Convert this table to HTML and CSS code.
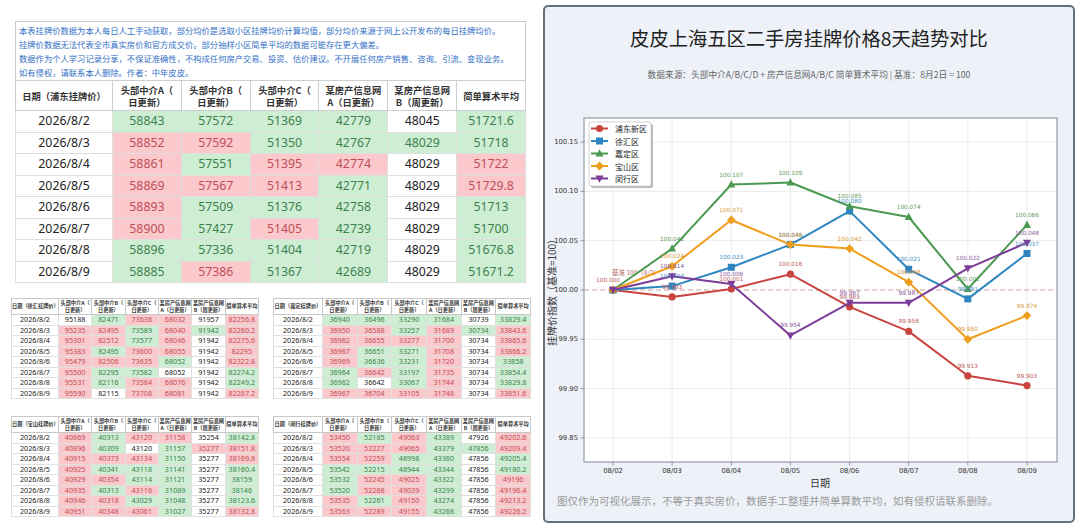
FILE: index.html
```html
<!DOCTYPE html>
<html lang="zh-CN">
<head>
<meta charset="utf-8">
<title>皮皮上海五区二手房挂牌价格8天趋势对比</title>
<link rel="stylesheet" href="styles.css">
</head>
<body>
<div class="page">
  <div class="left">
    <div class="notice">
      本表挂牌价数据为本人每日人工手动获取，部分均价是选取小区挂牌均价计算均值，部分均价来源于网上公开发布的每日挂牌均价。<br>
      挂牌价数据无法代表全市真实房价和官方成交价。部分抽样小区简单平均的数据可能存在更大偏差。<br>
      数据作为个人学习记录分享，不保证准确性，不构成任何房产交易、投资、估价建议。不开展任何房产销售、咨询、引流、变现业务。<br>
      如有侵权，请联系本人删除。作者：中年皮皮。
    </div>
    <table class="main">
      <colgroup><col class="c-date"><col><col><col><col><col><col></colgroup>
      <thead>
        <tr><th>日期（浦东挂牌价）</th><th>头部中介A（<br>日更新）</th><th>头部中介B（<br>日更新）</th><th>头部中介C（<br>日更新）</th><th>某房产信息网<br>A（日更新）</th><th>某房产信息网<br>B（周更新）</th><th>简单算术平均</th></tr>
      </thead>
      <tbody>
        <tr><td>2026/8/2</td><td class="g">58843</td><td class="g">57572</td><td class="g">51369</td><td class="g">42779</td><td>48045</td><td class="g">51721.6</td></tr>
        <tr><td>2026/8/3</td><td class="r">58852</td><td class="r">57592</td><td class="g">51350</td><td class="g">42767</td><td class="g">48029</td><td class="g">51718</td></tr>
        <tr><td>2026/8/4</td><td class="r">58861</td><td class="g">57551</td><td class="r">51395</td><td class="r">42774</td><td>48029</td><td class="r">51722</td></tr>
        <tr><td>2026/8/5</td><td class="r">58869</td><td class="r">57567</td><td class="r">51413</td><td class="g">42771</td><td>48029</td><td class="r">51729.8</td></tr>
        <tr><td>2026/8/6</td><td class="r">58893</td><td class="g">57509</td><td class="g">51376</td><td class="g">42758</td><td>48029</td><td class="g">51713</td></tr>
        <tr><td>2026/8/7</td><td class="r">58900</td><td class="g">57427</td><td class="r">51405</td><td class="g">42739</td><td>48029</td><td class="g">51700</td></tr>
        <tr><td>2026/8/8</td><td class="g">58896</td><td class="g">57336</td><td class="g">51404</td><td class="g">42719</td><td>48029</td><td class="g">51676.8</td></tr>
        <tr><td>2026/8/9</td><td class="g">58885</td><td class="r">57386</td><td class="g">51367</td><td class="g">42689</td><td>48029</td><td class="g">51671.2</td></tr>
      </tbody>
    </table>

    <div class="minis">
      <table class="mini">
        <colgroup><col class="m-date"><col><col><col><col><col><col></colgroup>
        <thead><tr><th>日期（徐汇挂牌价）</th><th>头部中介A（<br>日更新）</th><th>头部中介B（<br>日更新）</th><th>头部中介C（<br>日更新）</th><th>某房产信息网<br>A（日更新）</th><th>某房产信息网<br>B（周更新）</th><th>简单算术平均</th></tr></thead>
        <tbody>
          <tr><td>2026/8/2</td><td>95188</td><td class="g">82471</td><td class="r">73636</td><td class="r">68032</td><td>91957</td><td class="r">82256.8</td></tr>
          <tr><td>2026/8/3</td><td class="r">95235</td><td class="r">82495</td><td class="g">73589</td><td class="r">68040</td><td class="g">91942</td><td class="r">82260.2</td></tr>
          <tr><td>2026/8/4</td><td class="r">95301</td><td class="r">82512</td><td class="g">73577</td><td class="r">68046</td><td>91942</td><td class="r">82275.6</td></tr>
          <tr><td>2026/8/5</td><td class="r">95383</td><td class="g">82495</td><td class="r">73600</td><td class="r">68055</td><td>91942</td><td class="r">82295</td></tr>
          <tr><td>2026/8/6</td><td class="r">95479</td><td class="r">82506</td><td class="r">73635</td><td class="g">68052</td><td>91942</td><td class="r">82322.8</td></tr>
          <tr><td>2026/8/7</td><td class="r">95500</td><td class="g">82295</td><td class="g">73582</td><td>68052</td><td>91942</td><td class="g">82274.2</td></tr>
          <tr><td>2026/8/8</td><td class="r">95531</td><td class="g">82116</td><td class="r">73584</td><td class="r">68076</td><td>91942</td><td class="g">82249.2</td></tr>
          <tr><td>2026/8/9</td><td class="r">95590</td><td>82115</td><td class="r">73708</td><td class="r">68081</td><td>91942</td><td class="r">82287.2</td></tr>
        </tbody>
      </table>

      <table class="mini">
        <colgroup><col class="m-date"><col><col><col><col><col><col></colgroup>
        <thead><tr><th>日期（嘉定挂牌价）</th><th>头部中介A（<br>日更新）</th><th>头部中介B（<br>日更新）</th><th>头部中介C（<br>日更新）</th><th>某房产信息网<br>A（日更新）</th><th>某房产信息网<br>B（周更新）</th><th>简单算术平均</th></tr></thead>
        <tbody>
          <tr><td>2026/8/2</td><td class="g">36940</td><td class="g">36496</td><td class="g">33290</td><td class="g">31684</td><td>30739</td><td class="g">33829.4</td></tr>
          <tr><td>2026/8/3</td><td class="r">36950</td><td class="r">36588</td><td class="g">33257</td><td class="r">31689</td><td class="g">30734</td><td class="r">33843.6</td></tr>
          <tr><td>2026/8/4</td><td class="r">36962</td><td class="r">36655</td><td class="r">33277</td><td class="r">31700</td><td>30734</td><td class="r">33865.6</td></tr>
          <tr><td>2026/8/5</td><td class="r">36967</td><td class="g">36651</td><td class="g">33271</td><td class="r">31708</td><td>30734</td><td class="r">33866.2</td></tr>
          <tr><td>2026/8/6</td><td class="r">36969</td><td class="g">36636</td><td class="g">33231</td><td class="r">31720</td><td>30734</td><td class="g">33858</td></tr>
          <tr><td>2026/8/7</td><td class="g">36964</td><td class="r">36642</td><td class="g">33197</td><td class="r">31735</td><td>30734</td><td class="g">33854.4</td></tr>
          <tr><td>2026/8/8</td><td class="g">36962</td><td>36642</td><td class="g">33067</td><td class="r">31744</td><td>30734</td><td class="g">33829.8</td></tr>
          <tr><td>2026/8/9</td><td class="r">36967</td><td class="r">36704</td><td class="r">33105</td><td class="r">31748</td><td>30734</td><td class="r">33851.6</td></tr>
        </tbody>
      </table>

      <table class="mini">
        <colgroup><col class="m-date"><col><col><col><col><col><col></colgroup>
        <thead><tr><th>日期（宝山挂牌价）</th><th>头部中介A（<br>日更新）</th><th>头部中介B（<br>日更新）</th><th>头部中介C（<br>日更新）</th><th>某房产信息网<br>A（日更新）</th><th>某房产信息网<br>B（周更新）</th><th>简单算术平均</th></tr></thead>
        <tbody>
          <tr><td>2026/8/2</td><td class="r">40869</td><td class="g">40313</td><td class="r">43120</td><td class="r">31158</td><td>35254</td><td class="g">38142.8</td></tr>
          <tr><td>2026/8/3</td><td class="r">40896</td><td class="g">40309</td><td>43120</td><td class="g">31157</td><td class="r">35277</td><td class="r">38151.8</td></tr>
          <tr><td>2026/8/4</td><td class="r">40915</td><td class="r">40373</td><td class="r">43134</td><td class="g">31150</td><td>35277</td><td class="r">38169.8</td></tr>
          <tr><td>2026/8/5</td><td class="r">40925</td><td class="g">40341</td><td class="g">43118</td><td class="g">31141</td><td>35277</td><td class="g">38160.4</td></tr>
          <tr><td>2026/8/6</td><td class="r">40929</td><td class="r">40354</td><td class="g">43114</td><td class="g">31121</td><td>35277</td><td class="g">38159</td></tr>
          <tr><td>2026/8/7</td><td class="r">40935</td><td class="g">40313</td><td class="r">43116</td><td class="g">31089</td><td>35277</td><td class="g">38146</td></tr>
          <tr><td>2026/8/8</td><td class="r">40946</td><td class="r">40318</td><td class="g">43029</td><td class="g">31048</td><td>35277</td><td class="g">38123.6</td></tr>
          <tr><td>2026/8/9</td><td class="r">40951</td><td class="r">40348</td><td class="r">43061</td><td class="g">31027</td><td>35277</td><td class="r">38132.8</td></tr>
        </tbody>
      </table>

      <table class="mini">
        <colgroup><col class="m-date"><col><col><col><col><col><col></colgroup>
        <thead><tr><th>日期（闵行挂牌价）</th><th>头部中介A（<br>日更新）</th><th>头部中介B（<br>日更新）</th><th>头部中介C（<br>日更新）</th><th>某房产信息网<br>A（日更新）</th><th>某房产信息网<br>B（周更新）</th><th>简单算术平均</th></tr></thead>
        <tbody>
          <tr><td>2026/8/2</td><td class="r">53450</td><td class="g">52185</td><td class="r">49063</td><td class="g">43389</td><td>47926</td><td class="r">49202.6</td></tr>
          <tr><td>2026/8/3</td><td class="r">53520</td><td class="r">52227</td><td class="r">49065</td><td class="g">43379</td><td class="g">47856</td><td class="r">49209.4</td></tr>
          <tr><td>2026/8/4</td><td class="r">53554</td><td class="r">52259</td><td class="g">48998</td><td class="g">43360</td><td>47856</td><td class="g">49205.4</td></tr>
          <tr><td>2026/8/5</td><td class="g">53542</td><td class="g">52215</td><td class="g">48944</td><td class="g">43344</td><td>47856</td><td class="g">49180.2</td></tr>
          <tr><td>2026/8/6</td><td class="g">53532</td><td class="r">52245</td><td class="r">49025</td><td class="g">43322</td><td>47856</td><td class="r">49196</td></tr>
          <tr><td>2026/8/7</td><td class="g">53520</td><td class="r">52268</td><td class="r">49039</td><td class="g">43299</td><td>47856</td><td class="r">49196.4</td></tr>
          <tr><td>2026/8/8</td><td class="r">53535</td><td class="g">52261</td><td class="r">49150</td><td class="g">43274</td><td>47856</td><td class="r">49213.2</td></tr>
          <tr><td>2026/8/9</td><td class="r">53563</td><td class="r">52289</td><td class="r">49155</td><td class="g">43268</td><td>47856</td><td class="r">49226.2</td></tr>
        </tbody>
      </table>
    </div>
  </div>

  <div class="card">
    <div class="title">皮皮上海五区二手房挂牌价格8天趋势对比</div>
    <div class="sub">数据来源：头部中介A/B/C/D + 房产信息网A/B/C 简单算术平均 | 基准：8月2日 = 100</div>
    <svg class="chart" width="528" height="392" viewBox="545 100 528 392" xmlns="http://www.w3.org/2000/svg">
      <defs>
        <circle id="mk-o" cx="0" cy="0" r="3.6"/>
        <rect id="mk-s" x="-3.5" y="-3.5" width="7" height="7"/>
        <polygon id="mk-u" points="0,-4.3 4,3 -4,3"/>
        <polygon id="mk-d" points="0,-4.4 4.4,0 0,4.4 -4.4,0"/>
        <polygon id="mk-v" points="0,4.3 4,-3 -4,-3"/>
      </defs>
      <rect x="584" y="118" width="473" height="344" fill="#ffffff"/>
      <g class="grid">
        <line x1="584" y1="142.1" x2="1057" y2="142.1"/>
        <line x1="584" y1="191.4" x2="1057" y2="191.4"/>
        <line x1="584" y1="240.7" x2="1057" y2="240.7"/>
        <line x1="584" y1="339.3" x2="1057" y2="339.3"/>
        <line x1="584" y1="388.6" x2="1057" y2="388.6"/>
        <line x1="584" y1="437.9" x2="1057" y2="437.9"/>
        <line x1="613" y1="118" x2="613" y2="462"/>
        <line x1="672.1" y1="118" x2="672.1" y2="462"/>
        <line x1="731.3" y1="118" x2="731.3" y2="462"/>
        <line x1="790.4" y1="118" x2="790.4" y2="462"/>
        <line x1="849.6" y1="118" x2="849.6" y2="462"/>
        <line x1="908.7" y1="118" x2="908.7" y2="462"/>
        <line x1="967.8" y1="118" x2="967.8" y2="462"/>
        <line x1="1027" y1="118" x2="1027" y2="462"/>
      </g>
      <rect x="584" y="118" width="473" height="344" fill="none" stroke="#7f8893" stroke-width="1"/>
      <g class="ticks">
        <line x1="580.5" y1="142.1" x2="584" y2="142.1"/>
        <line x1="580.5" y1="191.4" x2="584" y2="191.4"/>
        <line x1="580.5" y1="240.7" x2="584" y2="240.7"/>
        <line x1="580.5" y1="290" x2="584" y2="290"/>
        <line x1="580.5" y1="339.3" x2="584" y2="339.3"/>
        <line x1="580.5" y1="388.6" x2="584" y2="388.6"/>
        <line x1="580.5" y1="437.9" x2="584" y2="437.9"/>
        <line x1="613" y1="462" x2="613" y2="465.5"/>
        <line x1="672.1" y1="462" x2="672.1" y2="465.5"/>
        <line x1="731.3" y1="462" x2="731.3" y2="465.5"/>
        <line x1="790.4" y1="462" x2="790.4" y2="465.5"/>
        <line x1="849.6" y1="462" x2="849.6" y2="465.5"/>
        <line x1="908.7" y1="462" x2="908.7" y2="465.5"/>
        <line x1="967.8" y1="462" x2="967.8" y2="465.5"/>
        <line x1="1027" y1="462" x2="1027" y2="465.5"/>
      </g>
      <g class="ytick">
        <text x="578" y="142.1">100.15</text>
        <text x="578" y="191.4">100.10</text>
        <text x="578" y="240.7">100.05</text>
        <text x="578" y="290">100.00</text>
        <text x="578" y="339.3">99.95</text>
        <text x="578" y="388.6">99.90</text>
        <text x="578" y="437.9">99.85</text>
      </g>
      <g class="xtick">
        <text x="613" y="471">08/02</text>
        <text x="672.1" y="471">08/03</text>
        <text x="731.3" y="471">08/04</text>
        <text x="790.4" y="471">08/05</text>
        <text x="849.6" y="471">08/06</text>
        <text x="908.7" y="471">08/07</text>
        <text x="967.8" y="471">08/08</text>
        <text x="1027" y="471">08/09</text>
      </g>
      <text class="axis-title" x="820" y="482">日期</text>
      <text class="axis-title" x="551" y="290" transform="rotate(-90 551 290)">挂牌价指数（基准=100）</text>

      <line class="baseline" x1="584" y1="290" x2="1057" y2="290"/>
      <text class="base-label" x="612" y="272">基准 100（8/2）</text>

      <g class="s-red">
        <polyline class="ln" points="613,290 672.1,296.9 731.3,289 790.4,274.2 849.6,306.8 908.7,331.4 967.8,375.8 1027,385.6"/>
        <use href="#mk-o" x="613" y="290"/><use href="#mk-o" x="672.1" y="296.9"/><use href="#mk-o" x="731.3" y="289"/><use href="#mk-o" x="790.4" y="274.2"/><use href="#mk-o" x="849.6" y="306.8"/><use href="#mk-o" x="908.7" y="331.4"/><use href="#mk-o" x="967.8" y="375.8"/><use href="#mk-o" x="1027" y="385.6"/>
      </g>
      <g class="s-blue">
        <polyline class="ln" points="613,290 672.1,286.1 731.3,267.3 790.4,244.6 849.6,211.1 908.7,269.3 967.8,298.9 1027,253.5"/>
        <use href="#mk-s" x="613" y="290"/><use href="#mk-s" x="672.1" y="286.1"/><use href="#mk-s" x="731.3" y="267.3"/><use href="#mk-s" x="790.4" y="244.6"/><use href="#mk-s" x="849.6" y="211.1"/><use href="#mk-s" x="908.7" y="269.3"/><use href="#mk-s" x="967.8" y="298.9"/><use href="#mk-s" x="1027" y="253.5"/>
      </g>
      <g class="s-green">
        <polyline class="ln" points="613,290 672.1,248.6 731.3,184.5 790.4,182.5 849.6,206.2 908.7,217 967.8,289 1027,224.9"/>
        <use href="#mk-u" x="613" y="290"/><use href="#mk-u" x="672.1" y="248.6"/><use href="#mk-u" x="731.3" y="184.5"/><use href="#mk-u" x="790.4" y="182.5"/><use href="#mk-u" x="849.6" y="206.2"/><use href="#mk-u" x="908.7" y="217"/><use href="#mk-u" x="967.8" y="289"/><use href="#mk-u" x="1027" y="224.9"/>
      </g>
      <g class="s-orange">
        <polyline class="ln" points="613,290 672.1,266.3 731.3,220 790.4,244.6 849.6,248.6 908.7,282.1 967.8,339.3 1027,315.6"/>
        <use href="#mk-d" x="613" y="290"/><use href="#mk-d" x="672.1" y="266.3"/><use href="#mk-d" x="731.3" y="220"/><use href="#mk-d" x="790.4" y="244.6"/><use href="#mk-d" x="849.6" y="248.6"/><use href="#mk-d" x="908.7" y="282.1"/><use href="#mk-d" x="967.8" y="339.3"/><use href="#mk-d" x="1027" y="315.6"/>
      </g>
      <g class="s-purple">
        <polyline class="ln" points="613,290 672.1,276.2 731.3,284.1 790.4,335.4 849.6,302.8 908.7,302.8 967.8,268.3 1027,242.7"/>
        <use href="#mk-v" x="613" y="290"/><use href="#mk-v" x="672.1" y="276.2"/><use href="#mk-v" x="731.3" y="284.1"/><use href="#mk-v" x="790.4" y="335.4"/><use href="#mk-v" x="849.6" y="302.8"/><use href="#mk-v" x="908.7" y="302.8"/><use href="#mk-v" x="967.8" y="268.3"/><use href="#mk-v" x="1027" y="242.7"/>
      </g>

      <g class="dl l-red">
        <text x="608" y="280">100.000</text>
        <text x="672.1" y="286.9">99.993</text>
        <text x="731.3" y="279">100.001</text>
        <text x="790.4" y="264.2">100.016</text>
        <text x="849.6" y="296.8">99.983</text>
        <text x="908.7" y="321.4">99.958</text>
        <text x="967.8" y="365.8">99.913</text>
        <text x="1027" y="375.6">99.903</text>
      </g>
      <g class="dl l-blue">
        <text x="672.1" y="276.1">100.004</text>
        <text x="731.3" y="257.3">100.023</text>
        <text x="790.4" y="234.6">100.046</text>
        <text x="849.6" y="201.1">100.080</text>
        <text x="908.7" y="259.3">100.021</text>
        <text x="967.8" y="288.9">99.991</text>
        <text x="1027" y="243.5">100.037</text>
      </g>
      <g class="dl l-green">
        <text x="672.1" y="238.6">100.042</text>
        <text x="731.3" y="174.5">100.107</text>
        <text x="790.4" y="172.5">100.109</text>
        <text x="849.6" y="196.2">100.085</text>
        <text x="908.7" y="207">100.074</text>
        <text x="967.8" y="279">100.001</text>
        <text x="1027" y="214.9">100.066</text>
      </g>
      <g class="dl l-orange">
        <text x="672.1" y="256.3">100.024</text>
        <text x="731.3" y="210">100.071</text>
        <text x="790.4" y="234.6">100.046</text>
        <text x="849.6" y="238.6">100.042</text>
        <text x="908.7" y="272.1">100.008</text>
        <text x="967.8" y="329.3">99.950</text>
        <text x="1027" y="305.6">99.974</text>
      </g>
      <g class="dl l-purple">
        <text x="672.1" y="266.2">100.014</text>
        <text x="731.3" y="274.1">100.006</text>
        <text x="790.4" y="325.4">99.954</text>
        <text x="849.6" y="292.8">99.987</text>
        <text x="908.7" y="292.8">99.987</text>
        <text x="967.8" y="258.3">100.022</text>
        <text x="1027" y="232.7">100.048</text>
      </g>

      <g class="legend">
        <rect x="591" y="124" width="62" height="64" rx="2" fill="#b8bcc2"/>
        <rect x="589" y="122" width="62" height="64" rx="2" fill="#ffffff" stroke="#c8c8c8" stroke-width="0.8"/>
        <g class="s-red"><line class="ln" x1="591" y1="128.5" x2="608" y2="128.5"/><use href="#mk-o" x="599.5" y="128.5"/></g>
        <g class="s-blue"><line class="ln" x1="591" y1="141" x2="608" y2="141"/><use href="#mk-s" x="599.5" y="141"/></g>
        <g class="s-green"><line class="ln" x1="591" y1="153.5" x2="608" y2="153.5"/><use href="#mk-u" x="599.5" y="153.5"/></g>
        <g class="s-orange"><line class="ln" x1="591" y1="166" x2="608" y2="166"/><use href="#mk-d" x="599.5" y="166"/></g>
        <g class="s-purple"><line class="ln" x1="591" y1="178.5" x2="608" y2="178.5"/><use href="#mk-v" x="599.5" y="178.5"/></g>
        <text class="leg" x="615" y="128.5">浦东新区</text>
        <text class="leg" x="615" y="141">徐汇区</text>
        <text class="leg" x="615" y="153.5">嘉定区</text>
        <text class="leg" x="615" y="166">宝山区</text>
        <text class="leg" x="615" y="178.5">闵行区</text>
      </g>
    </svg>
    <div class="foot">图仅作为可视化展示，不等于真实房价，数据手工整理并简单算数平均，如有侵权请联系删除。</div>
  </div>
</div>
</body>
</html>
```

FILE: styles.css
```css
html, body {
  margin: 0;
  padding: 0;
}
body {
  width: 1080px;
  height: 528px;
  overflow: hidden;
  background: #ffffff;
  font-family: "Noto Sans", "Noto Sans CJK SC", sans-serif;
  color: #222;
}
.page {
  display: flex;
  align-items: flex-start;
}
.left {
  width: 543px;
  box-sizing: border-box;
  padding: 21px 0 0 15px;
}
.notice {
  width: 511px;
  height: 59px;
  box-sizing: border-box;
  border: 1px solid #c9c9c9;
  border-bottom: none;
  padding: 1px 3px 0;
  font-family: "Noto Sans CJK SC", sans-serif;
  font-size: 8.3px;
  line-height: 14px;
  color: #3470c6;
  white-space: nowrap;
}

/* main table */
.main {
  width: 511px;
  border-collapse: collapse;
  table-layout: fixed;
}
.main .c-date { width: 97px; }
.main th {
  height: 29px;
  padding: 0;
  border: 1px solid #cfcfcf;
  font-family: "Noto Sans CJK SC", sans-serif;
  font-size: 9.3px;
  line-height: 12px;
  font-weight: 700;
  color: #333;
  text-align: center;
  background: #fff;
}
.main tbody tr { height: 21.5px; }
.main td {
  padding: 0;
  border: 1px solid #dedede;
  font-size: 12.3px;
  line-height: 14px;
  text-align: center;
  color: #222;
}

.g { background: #cdeed3; color: #3e7f4e !important; }
.r { background: #fbc8cc; color: #c04e58 !important; }

/* small tables */
.minis {
  display: grid;
  grid-template-columns: 248px 258px;
  column-gap: 14px;
  row-gap: 17px;
  margin: 15px 0 0 -4px;
}
.mini {
  width: 100%;
  border-collapse: collapse;
  table-layout: fixed;
}
.mini .m-date { width: 19%; }
.mini th {
  height: 15px;
  padding: 0;
  border: 1px solid #c8c8c8;
  font-family: "Noto Sans CJK SC", sans-serif;
  font-size: 5.2px;
  line-height: 6.3px;
  font-weight: 700;
  color: #333;
  text-align: center;
  white-space: nowrap;
}
.mini tbody tr { height: 10.5px; }
.mini td {
  padding: 0;
  border: 1px solid #e0e0e0;
  font-size: 7.2px;
  line-height: 9px;
  text-align: center;
  color: #222;
}

/* chart card */
.card {
  margin-top: 5px;
  width: 532px;
  height: 518px;
  box-sizing: border-box;
  border: 2px solid #67707a;
  border-radius: 5px;
  background: #eef2f8;
  display: flex;
  flex-direction: column;
}
.title {
  padding-top: 18px;
  font-family: "Noto Sans CJK SC", sans-serif;
  font-size: 19.3px;
  line-height: 26px;
  text-align: center;
  color: #222;
}
.sub {
  margin-top: 18px;
  font-family: "Noto Sans CJK SC", sans-serif;
  font-size: 8.7px;
  line-height: 12px;
  text-align: center;
  color: #666;
}
.chart {
  display: block;
  margin-top: 19px;
  font-family: "DejaVu Sans", "Noto Sans CJK SC", sans-serif;
}
.foot {
  margin-top: 2px;
  padding-left: 12px;
  font-family: "Noto Sans CJK SC", sans-serif;
  font-size: 10.5px;
  line-height: 14px;
  color: #9a9a9a;
}

.grid line { stroke: #e6e6e6; stroke-width: 0.8; }
.ticks line { stroke: #7f8893; stroke-width: 0.8; }
.ytick text {
  font-size: 6.8px;
  fill: #333;
  text-anchor: end;
  dominant-baseline: central;
}
.xtick text {
  font-size: 6.8px;
  fill: #333;
  text-anchor: middle;
  dominant-baseline: central;
}
.axis-title {
  font-family: "Noto Sans CJK SC", sans-serif;
  font-size: 10px;
  fill: #333;
  text-anchor: middle;
  dominant-baseline: central;
}
.baseline {
  stroke: #c9a2a2;
  stroke-width: 1.2;
  stroke-dasharray: 5 3;
}
.base-label {
  font-family: "Noto Sans CJK SC", sans-serif;
  font-size: 6.5px;
  fill: #b06a64;
  dominant-baseline: central;
}
.ln { fill: none; stroke-width: 2; stroke-linejoin: round; }
.s-red { fill: #c9433f; }
.s-red .ln { stroke: #c9433f; }
.s-blue { fill: #2e86c1; }
.s-blue .ln { stroke: #2e86c1; }
.s-green { fill: #4c9a52; }
.s-green .ln { stroke: #4c9a52; }
.s-orange { fill: #f09d1c; }
.s-orange .ln { stroke: #f09d1c; }
.s-purple { fill: #7d3c98; }
.s-purple .ln { stroke: #7d3c98; }

.dl text {
  font-size: 5.8px;
  text-anchor: middle;
  dominant-baseline: central;
}
.l-red { fill: #c0605c; }
.l-blue { fill: #4a8fc0; }
.l-green { fill: #5f9a64; }
.l-orange { fill: #d99a3a; }
.l-purple { fill: #8a5aa0; }

.leg {
  font-family: "Noto Sans CJK SC", sans-serif;
  font-size: 8px;
  fill: #222;
  dominant-baseline: central;
}
```
